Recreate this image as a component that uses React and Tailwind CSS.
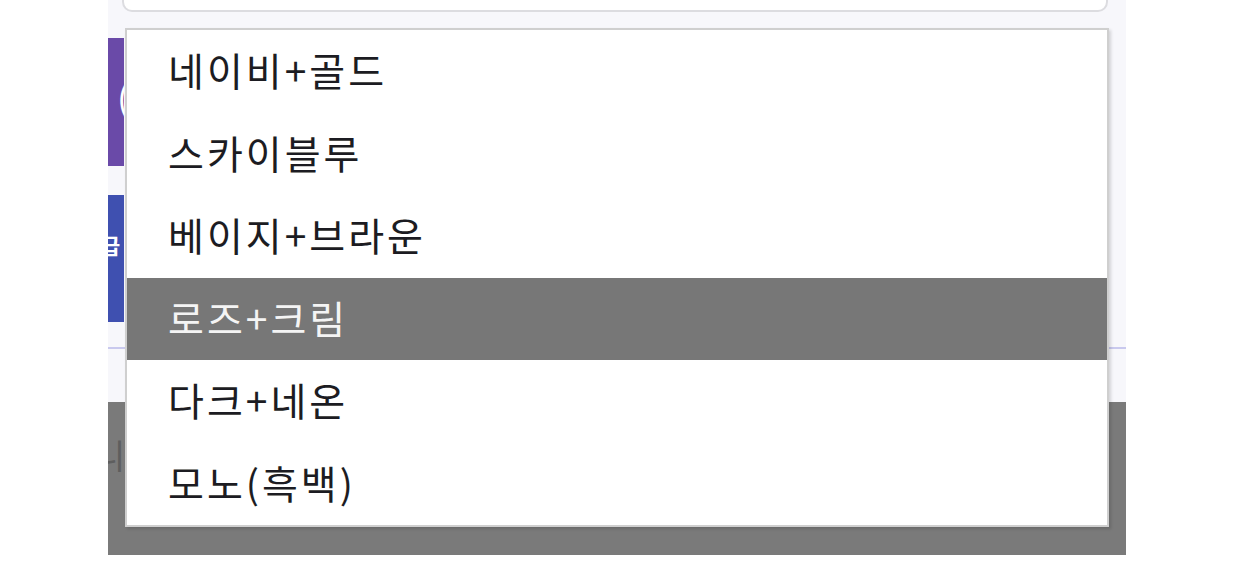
import React from 'react';

const options = ['네이비+골드', '스카이블루', '베이지+브라운', '로즈+크림', '다크+네온', '모노(흑백)'];

const App = () => {
  const selected = 3;

  return (
    <div className="w-[1260px] h-[565px] bg-white overflow-hidden relative" style={{ fontFamily: '"Noto Sans CJK KR", "Noto Sans", sans-serif' }}>
      {/* page behind the dropdown */}
      <div className="absolute left-[108px] top-0 w-[1018px] h-[555px] bg-[#f7f7fb] flex flex-col">
        <div className="ml-[14px] mr-[18px] -mt-[20px] h-[32px] bg-white border-2 border-[#dcdce0] rounded-[10px] shrink-0"></div>
        <div className="mt-[26px] w-[16px] h-[128px] bg-[#6a4aa8] relative overflow-hidden shrink-0">
          <span className="absolute left-[9px] top-[40px] text-white text-[36px] leading-none">(</span>
        </div>
        <div className="mt-[29px] w-[16px] h-[127px] bg-[#3f50b0] relative overflow-hidden shrink-0">
          <span className="absolute left-[-8px] top-[38px] text-white text-[22px] leading-none font-bold">급</span>
        </div>
        <div className="mt-[25px] h-[2px] bg-[#c9c9ee] shrink-0"></div>
        <div className="mt-[53px] flex-1 bg-[#7a7a7a] relative overflow-hidden">
          <span className="absolute left-[-14px] top-[36px] text-[#5e5e5e] text-[34px] leading-none">니</span>
        </div>
      </div>

      {/* dropdown list */}
      <div className="absolute left-[125px] top-[28px] w-[984px] bg-white border-2 border-[#cfcfcf] shadow-[2px_2px_3px_rgba(0,0,0,0.15)] flex flex-col">
        {options.map((opt, i) => (
          <div
            key={i}
            className={`h-[82.5px] flex items-center pl-[41px] pb-[4px] text-[39px] font-normal tracking-[3px] ${
              i === selected ? 'bg-[#777777] text-[#f4f4f4]' : 'text-[#1c1c22]'
            }`}
          >
            {opt}
          </div>
        ))}
      </div>
    </div>
  );
};

export default App;
